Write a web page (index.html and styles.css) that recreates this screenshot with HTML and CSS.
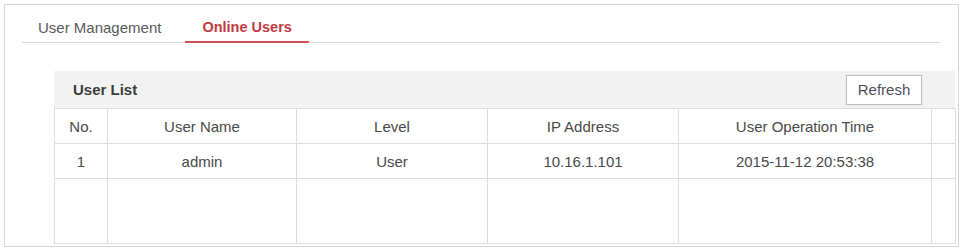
FILE: index.html
```html
<!DOCTYPE html>
<html lang="en">
<head>
<meta charset="UTF-8">
<meta name="viewport" content="width=device-width, initial-scale=1.0">
<link rel="stylesheet" href="styles.css">
<title>Online Users</title>
</head>
<body>
<div class="panel">
    <div class="tabs">
        <div class="tab">User Management</div>
        <div class="tab active">Online Users</div>
    </div>
    <div class="user-list">
        <div class="list-header">
            <span class="list-title">User List</span>
            <button class="refresh-btn">Refresh</button>
        </div>
        <table class="users">
            <colgroup>
                <col class="c-no">
                <col class="c-name">
                <col class="c-level">
                <col class="c-ip">
                <col class="c-time">
                <col class="c-pad">
            </colgroup>
            <thead>
                <tr>
                    <th>No.</th>
                    <th>User Name</th>
                    <th>Level</th>
                    <th>IP Address</th>
                    <th>User Operation Time</th>
                    <th></th>
                </tr>
            </thead>
            <tbody>
                <tr>
                    <td>1</td>
                    <td>admin</td>
                    <td>User</td>
                    <td>10.16.1.101</td>
                    <td>2015-11-12 20:53:38</td>
                    <td></td>
                </tr>
                <tr class="empty">
                    <td></td>
                    <td></td>
                    <td></td>
                    <td></td>
                    <td></td>
                    <td></td>
                </tr>
            </tbody>
        </table>
    </div>
</div>
</body>
</html>
```

FILE: styles.css
```css
body {
    margin: 0;
    background: #fff;
    font-family: "Liberation Sans", Arial, sans-serif;
    color: #4a4a4a;
}

.panel {
    margin: 4px 0 0 4px;
    width: 955px;
    height: 243px;
    border: 1px solid #d6d6d6;
    box-sizing: border-box;
    overflow: hidden;
}

.tabs {
    display: flex;
    gap: 8px;
    margin: 9px 18px 0 17px;
    border-bottom: 1px solid #dadada;
}

.tab {
    padding: 0 16px;
    font-size: 15px;
    line-height: 27px;
    color: #5a5a5a;
    border-bottom: 2px solid transparent;
    margin-bottom: -1px;
}

.tab.active {
    font-weight: bold;
    font-size: 14.5px;
    padding: 0 17px;
    color: #c23a40;
    border-bottom-color: #cf5258;
}

.user-list {
    margin: 28px 3px 0 49px;
}

.list-header {
    display: flex;
    justify-content: space-between;
    align-items: center;
    height: 37px;
    padding: 0 33px 0 19px;
    background: #f2f2f2;
}

.list-title {
    font-size: 15px;
    font-weight: bold;
    color: #3c3c3c;
}

.refresh-btn {
    width: 76px;
    height: 30px;
    padding: 0;
    font-family: "Liberation Sans", Arial, sans-serif;
    font-size: 15px;
    color: #4f4f5a;
    background: #fff;
    border: 1px solid #bdbdbd;
    box-shadow: 0 0 1px rgba(0, 0, 0, 0.15);
}

.users {
    width: 100%;
    border-collapse: collapse;
    table-layout: fixed;
    font-size: 15px;
}

.c-no { width: 53px; }
.c-name { width: 189px; }
.c-level { width: 191px; }
.c-ip { width: 191px; }
.c-time { width: 253px; }
.c-pad { width: 24px; }

.users th,
.users td {
    height: 34px;
    padding: 0;
    border: 1px solid #dedede;
    text-align: center;
    font-weight: normal;
    color: #4a4a4a;
}

.users .empty td {
    height: 64px;
}
```
